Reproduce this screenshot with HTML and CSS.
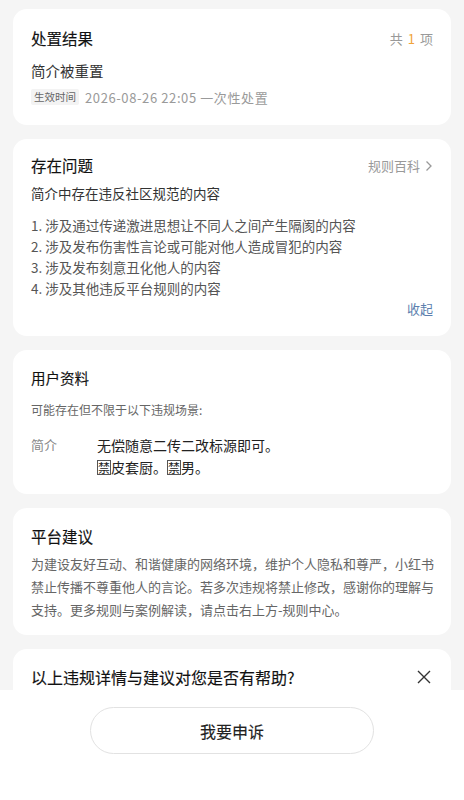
FILE: index.html
```html
<!DOCTYPE html>
<html lang="zh">
<head>
  <meta charset="UTF-8" />
  <meta name="viewport" content="width=device-width, initial-scale=1.0">
  <title>违规详情</title>
  <link rel="stylesheet" href="styles.css">
</head>
<body>
  <div class="card result-card">
    <div class="card-head">
      <div class="card-title">处置结果</div>
      <div class="head-extra">共 <span class="count">1</span> 项</div>
    </div>
    <div class="result-name">简介被重置</div>
    <div class="result-meta">
      <span class="tag">生效时间</span>
      <span class="meta-text">2026-08-26 22:05 一次性处置</span>
    </div>
  </div>

  <div class="card issue-card">
    <div class="card-head">
      <div class="card-title">存在问题</div>
      <div class="head-extra">规则百科
        <svg class="chevron" width="8" height="12" viewBox="0 0 8 12"><path d="M1.5 1.5L6 6l-4.5 4.5" fill="none" stroke="#999" stroke-width="1.3"/></svg>
      </div>
    </div>
    <div class="issue-sub">简介中存在违反社区规范的内容</div>
    <ol class="issue-list">
      <li>1. 涉及通过传递激进思想让不同人之间产生隔阂的内容</li>
      <li>2. 涉及发布伤害性言论或可能对他人造成冒犯的内容</li>
      <li>3. 涉及发布刻意丑化他人的内容</li>
      <li>4. 涉及其他违反平台规则的内容</li>
    </ol>
    <div class="fold">收起</div>
  </div>

  <div class="card profile-card">
    <div class="card-title small">用户资料</div>
    <div class="profile-sub">可能存在但不限于以下违规场景:</div>
    <div class="profile-row">
      <div class="profile-label">简介</div>
      <div class="profile-value">无偿随意二传二改标源即可。<br><span class="boxed">禁</span>皮套厨。<span class="boxed">禁</span>男。</div>
    </div>
  </div>

  <div class="card advice-card">
    <div class="card-title">平台建议</div>
    <p class="advice-text">为建设友好互动、和谐健康的网络环境，维护个人隐私和尊严，小红书禁止传播不尊重他人的言论。若多次违规将禁止修改，感谢你的理解与支持。更多规则与案例解读，请点击右上方-规则中心。</p>
  </div>

  <div class="card feedback-card">
    <div class="card-head">
      <div class="card-title big">以上违规详情与建议对您是否有帮助?</div>
      <svg class="close" width="14" height="14" viewBox="0 0 14 14"><path d="M1 1l12 12M13 1L1 13" stroke="#333" stroke-width="1.4"/></svg>
    </div>
  </div>

  <div class="bottom-bar">
    <button class="appeal-btn">我要申诉</button>
  </div>
</body>
</html>
```

FILE: styles.css
```css
body {
  margin: 0;
  padding: 9px 13px 120px;
  background: #f5f5f5;
  font-family: "Noto Sans CJK SC", "Liberation Sans", sans-serif;
  color: #333;
}

.card {
  background: #fff;
  border-radius: 14px;
  padding: 18px 18px;
  margin-bottom: 14px;
}

.card-head {
  display: flex;
  justify-content: space-between;
  align-items: center;
}

.card-title {
  font-size: 15.5px;
  line-height: 22px;
  font-weight: 400;
  color: #111;
  -webkit-text-stroke: 0.15px #111;
}

.card-title.small {
  font-size: 14.5px;
}

.card-title.big {
  font-size: 16px;
}

.head-extra {
  font-size: 13px;
  color: #999;
  display: flex;
  align-items: center;
  gap: 5px;
}

.count {
  color: #f0a43a;
}

.chevron {
  margin-top: 1px;
}

/* 处置结果 */
.result-name {
  margin-top: 11px;
  font-size: 14.5px;
  line-height: 22px;
  color: #333;
}

.result-meta {
  margin-top: 5px;
  display: flex;
  align-items: center;
  height: 20px;
}

.tag {
  font-size: 10.5px;
  line-height: 16px;
  padding: 0 3px;
  background: #f3f3f3;
  color: #666;
  border-radius: 2px;
  margin-right: 6px;
}

.meta-text {
  font-size: 13px;
  color: #9a9a9a;
  letter-spacing: 0.6px;
}

/* 存在问题 */
.issue-card {
  padding: 15px 18px 17px;
}

.issue-sub {
  margin-top: 6px;
  font-size: 13.5px;
  line-height: 22px;
  color: #333;
}

.issue-list {
  list-style: none;
  margin: 11px 0 0;
  padding: 0;
  font-size: 13.5px;
  line-height: 21px;
  color: #555;
}

.fold {
  text-align: right;
  font-size: 13px;
  line-height: 20px;
  color: #5d7fae;
}

/* 用户资料 */
.profile-card {
  padding: 17px 18px 16px;
}

.profile-sub {
  margin-top: 11px;
  font-size: 12px;
  line-height: 20px;
  color: #666;
}

.profile-row {
  margin-top: 14px;
  display: flex;
}

.profile-label {
  width: 66px;
  font-size: 13px;
  line-height: 22px;
  color: #888;
}

.profile-value {
  font-size: 14px;
  line-height: 22px;
  color: #222;
}

.boxed {
  display: inline-block;
  line-height: 13px;
  border: 1px solid #555;
  font-size: 12px;
}

/* 平台建议 */
.advice-card {
  padding: 17px 14px 14px 18px;
}

.advice-text {
  margin: 5px 0 0;
  font-size: 13px;
  line-height: 23px;
  color: #666;
}

/* 反馈 */
.feedback-card {
  padding: 17px 20px 60px 18px;
}

.bottom-bar {
  position: fixed;
  left: 0;
  right: 0;
  bottom: 0;
  height: 110px;
  background: #fff;
  display: flex;
  justify-content: center;
  padding-top: 17px;
  box-sizing: border-box;
}

.appeal-btn {
  width: 284px;
  height: 47px;
  border-radius: 24px;
  border: 1px solid #e2e2e2;
  background: #fff;
  font-family: "Noto Sans CJK SC", "Liberation Sans", sans-serif;
  font-size: 16px;
  font-weight: 400;
  color: #222;
  -webkit-text-stroke: 0.15px #222;
}
```
